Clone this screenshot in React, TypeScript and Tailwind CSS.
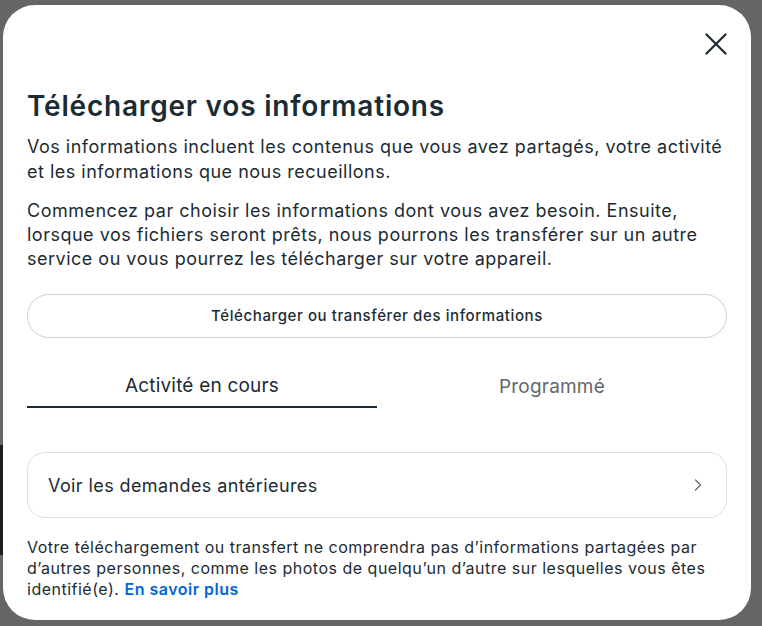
import { ChevronRight } from "lucide-react"

export default function App() {
  return (
    <div
      className="flex h-[626px] w-[762px] overflow-hidden bg-[#656565] pt-[5px]"
      style={{ fontFamily: "Inter, 'Liberation Sans', sans-serif" }}
    >
      {/* page behind the overlay, mostly hidden */}
      <div className="w-[3px] shrink-0">
        <div className="mt-[440px] h-[110px] w-[3px] bg-[#1a1d21]" />
      </div>

      {/* modal */}
      <div className="h-[615px] w-[748px] shrink-0 rounded-[32px] bg-white px-[24px] text-[#1c2b33]">
        <div className="flex justify-end pt-[24px]">
          <button className="-mr-[4px] flex h-[30px] w-[30px] items-center justify-center">
            <svg width="22" height="22" viewBox="0 0 22 22" fill="none">
              <path d="M1.5 1.5 20.5 20.5M20.5 1.5 1.5 20.5" stroke="#1c2b33" strokeWidth="2.2" strokeLinecap="round" />
            </svg>
          </button>
        </div>

        <h1 className="mt-[31px] text-[28px] font-semibold leading-[32px] tracking-[0.8px]">
          Télécharger vos informations
        </h1>
        <p className="mt-[12px] text-[18px] leading-[25px] tracking-[0.5px]">
          Vos informations incluent les contenus que vous avez partagés, votre activité et les
          informations que nous recueillons.
        </p>
        <p className="mt-[15px] text-[18px] leading-[24px] tracking-[0.5px]">
          Commencez par choisir les informations dont vous avez besoin. Ensuite, lorsque vos
          fichiers seront prêts, nous pourrons les transférer sur un autre service ou vous pourrez
          les télécharger sur votre appareil.
        </p>

        <button className="mt-[23px] flex h-[44px] w-full items-center justify-center rounded-full border border-[#ced0d4] text-[15px] font-medium tracking-[0.6px]">
          Télécharger ou transférer des informations
        </button>

        <div className="mt-[26px] grid grid-cols-2">
          <div className="flex h-[44px] items-center justify-center border-b-2 border-[#1c2b33] pt-[2px] text-[19px] tracking-[0.2px]">
            Activité en cours
          </div>
          <div className="flex h-[44px] items-center justify-center pt-[2px] text-[19px] tracking-[0.2px] text-[#65676b]">
            Programmé
          </div>
        </div>

        <div className="mt-[44px] flex h-[66px] items-center justify-between rounded-[18px] border border-[#dadde1] pl-[20px] pr-[18px]">
          <span className="text-[18px] tracking-[0.4px]">Voir les demandes antérieures</span>
          <ChevronRight className="h-[20px] w-[20px] text-[#65676b]" strokeWidth={1.5} />
        </div>

        <p className="mt-[19px] text-[16px] leading-[21px] tracking-[0.5px]">
          Votre téléchargement ou transfert ne comprendra pas d’informations partagées par
          d’autres personnes, comme les photos de quelqu’un d’autre sur lesquelles vous êtes
          identifié(e).{" "}
          <span className="font-semibold text-[#0064e0]">En savoir plus</span>
        </p>
      </div>
    </div>
  )
}
